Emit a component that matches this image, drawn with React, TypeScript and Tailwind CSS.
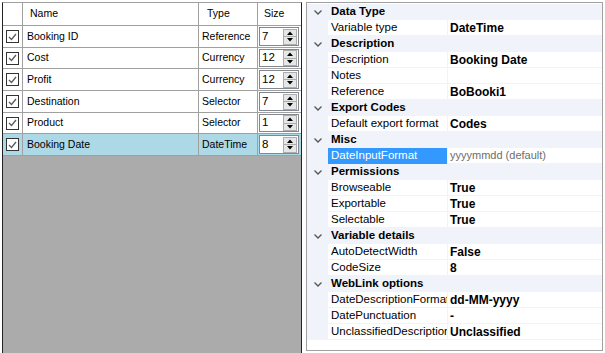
import React from "react";

const leftRows = [
  { name: "Booking ID", type: "Reference", size: "7", h: "h-[22px]" },
  { name: "Cost", type: "Currency", size: "12", h: "h-[21px]" },
  { name: "Profit", type: "Currency", size: "12", h: "h-[22px]" },
  { name: "Destination", type: "Selector", size: "7", h: "h-[22px]" },
  { name: "Product", type: "Selector", size: "1", h: "h-[21px]" },
  { name: "Booking Date", type: "DateTime", size: "8", h: "h-[22px]", sel: true },
];

type PRow =
  | { cat: string }
  | { label: string; value: string; sel?: boolean; dim?: boolean };

const props: PRow[] = [
  { cat: "Data Type" },
  { label: "Variable type", value: "DateTime" },
  { cat: "Description" },
  { label: "Description", value: "Booking Date" },
  { label: "Notes", value: "" },
  { label: "Reference", value: "BoBooki1" },
  { cat: "Export Codes" },
  { label: "Default export format", value: "Codes" },
  { cat: "Misc" },
  { label: "DateInputFormat", value: "yyyymmdd (default)", sel: true, dim: true },
  { cat: "Permissions" },
  { label: "Browseable", value: "True" },
  { label: "Exportable", value: "True" },
  { label: "Selectable", value: "True" },
  { cat: "Variable details" },
  { label: "AutoDetectWidth", value: "False" },
  { label: "CodeSize", value: "8" },
  { cat: "WebLink options" },
  { label: "DateDescriptionFormat", value: "dd-MM-yyyy" },
  { label: "DatePunctuation", value: "-" },
  { label: "UnclassifiedDescription", value: "Unclassified" },
];

function Check() {
  return (
    <div className="w-[13px] h-[13px] border border-[#333] bg-white flex items-center justify-center">
      <svg width="9" height="8" viewBox="0 0 9 8">
        <path d="M1 4 L3.5 6.5 L8 1" fill="none" stroke="#5a5a5a" strokeWidth="1.3" />
      </svg>
    </div>
  );
}

function Spin({ v }: { v: string }) {
  return (
    <div className="ml-[1px] mr-[2px] h-full py-[1px] w-full">
      <div className="h-full bg-white border border-[#828790] flex items-center justify-between pl-[2px] pr-[1px]">
        <span className="text-[11.5px]">{v}</span>
        <div className="w-[14px] h-[16px] flex flex-col border border-[#acacac] bg-[#e6e6e6]">
          <div className="flex-1 flex items-center justify-center border-b border-[#acacac]">
            <svg width="6" height="4" viewBox="0 0 6 4">
              <path d="M0 4 L3 0.5 L6 4 Z" fill="#000" />
            </svg>
          </div>
          <div className="flex-1 flex items-center justify-center">
            <svg width="6" height="4" viewBox="0 0 6 4">
              <path d="M0 0 L3 3.5 L6 0 Z" fill="#000" />
            </svg>
          </div>
        </div>
      </div>
    </div>
  );
}

function Chevron() {
  return (
    <svg width="8" height="5" viewBox="0 0 8 5">
      <path d="M0.5 0.5 L4 4 L7.5 0.5" fill="none" stroke="#555" strokeWidth="1.3" />
    </svg>
  );
}

export default function App() {
  return (
    <div className="w-[605px] h-[353px] bg-white flex overflow-hidden font-['Liberation_Sans',Arial,sans-serif] text-black">
      {/* Left grid */}
      <div className="ml-[2px] mt-[2px] w-[300px] h-[351px] border-l border-r border-t border-[#222] border-t-[#a0a0a0] bg-[#ababab] flex flex-col text-[10.5px]">
        <div className="flex h-[23px] bg-white border-b border-[#a0a0a0]">
          <div className="w-[20px] border-r border-[#a0a0a0]" />
          <div className="w-[176px] border-r border-[#a0a0a0] pl-[7px] flex items-center">Name</div>
          <div className="w-[59px] border-r border-[#a0a0a0] pl-[8px] flex items-center">Type</div>
          <div className="w-[43px] pl-[6px] flex items-center">Size</div>
        </div>
        {leftRows.map((r) => (
          <div
            key={r.name}
            className={`flex ${r.h} border-b border-[#a0a0a0] ${r.sel ? "bg-[#add8e6]" : "bg-white"}`}
          >
            <div className="w-[20px] border-r border-[#a0a0a0] flex items-center pl-[3px]">
              <Check />
            </div>
            <div className="w-[176px] border-r border-[#a0a0a0] pl-[4px] flex items-center">{r.name}</div>
            <div className="w-[59px] border-r border-[#a0a0a0] pl-[3px] flex items-center">{r.type}</div>
            <div className="w-[43px] flex items-center">
              <Spin v={r.size} />
            </div>
          </div>
        ))}
      </div>

      {/* Right property grid */}
      <div className="ml-[4px] mt-[2px] w-[297px] h-[349px] border border-[#a0a0a0] bg-white pt-[1px] flex flex-col text-[11.5px]">
        {props.map((p, i) =>
          "cat" in p ? (
            <div key={i} className="flex h-[16px] bg-[#f0f3f9] items-center">
              <div className="w-[21px] flex items-center justify-center pl-[1px]">
                <Chevron />
              </div>
              <div className="pl-[3px] font-bold text-[11.5px] whitespace-nowrap">{p.cat}</div>
            </div>
          ) : (
            <div key={i} className="flex h-[16px]">
              <div className="w-[21px] bg-[#f0f3f9]" />
              <div
                className={`w-[119px] pl-[3px] flex items-center overflow-hidden whitespace-nowrap border-b ${
                  p.sel ? "bg-[#3399ff] text-white border-[#3399ff]" : "border-[#f0f3f9]"
                }`}
              >
                {p.label}
              </div>
              <div className="w-[1px] bg-[#f0f3f9]" />
              <div
                className={`w-[154px] pl-[2px] flex items-center whitespace-nowrap border-b border-[#f0f3f9] ${
                  p.dim ? "text-[#6d6d6d] text-[11px]" : "font-bold text-[12px]"
                }`}
              >
                {p.value}
              </div>
            </div>
          )
        )}
      </div>
    </div>
  );
}
